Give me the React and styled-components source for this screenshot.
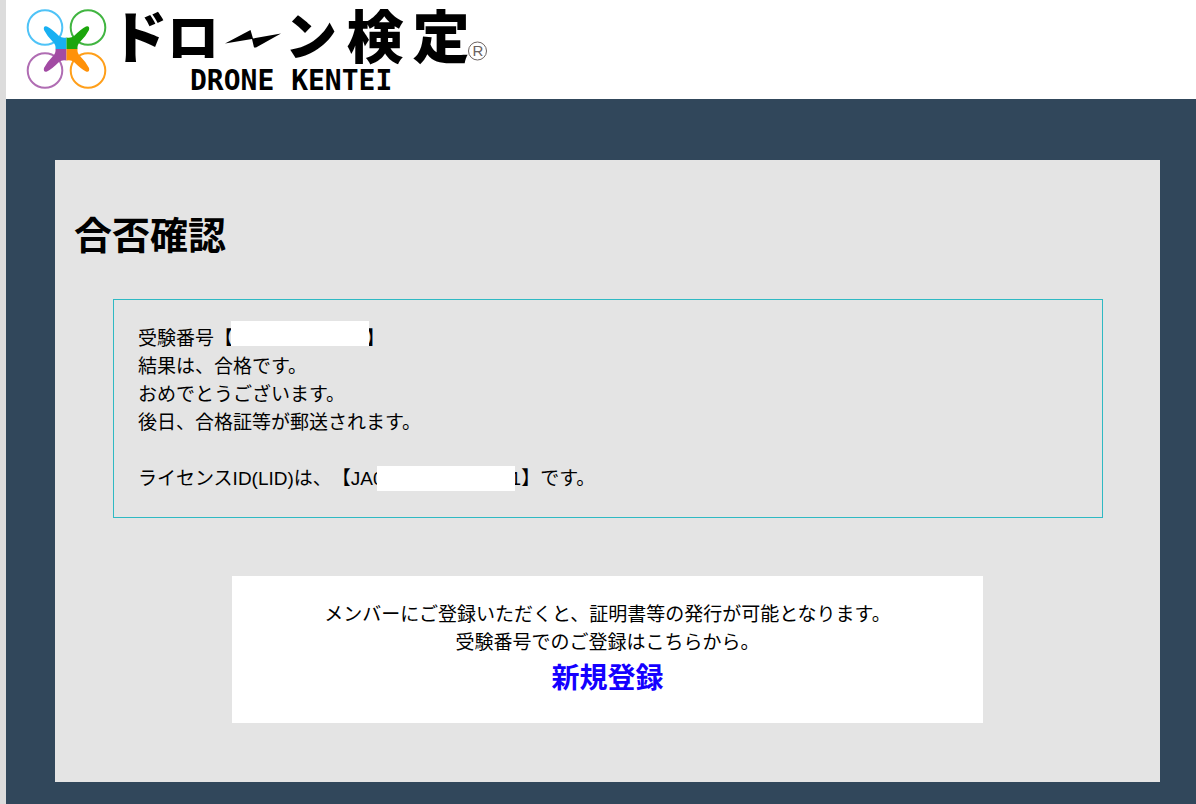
import React from "react";
import styled, { createGlobalStyle } from "styled-components";

const GlobalStyle = createGlobalStyle`
  body {
    margin: 0;
    background: #31475b;
    color: #000;
    font-family: "Liberation Sans", "Noto Sans CJK JP", sans-serif;
    font-size: 19px;
    line-height: 28px;
    text-spacing-trim: space-all;
  }
`;

const Page = styled.div`
  box-sizing: border-box;
  min-height: 100vh;
  border-left: 6px solid #dcdcdc;
  background: #31475b;
`;

const Header = styled.header`
  padding-left: 16px;
  background: #fff;
`;

const LogoArt = styled.svg`
  display: block;
  width: 480px;
  height: 99px;
  overflow: visible;
`;

const LogoKana = styled.text`
  font-family: "Noto Sans CJK JP", sans-serif;
  font-size: ${(p) => (p.$small ? "52px" : "57px")};
  font-weight: 900;
  text-anchor: middle;
`;

const LogoLatin = styled.text`
  font-family: "DejaVu Sans Mono", monospace;
  font-size: 28px;
  font-weight: 700;
`;

const LogoMark = styled.text`
  font-family: "Liberation Sans", sans-serif;
  font-size: 15px;
  fill: #6b6260;
  text-anchor: middle;
`;

const Main = styled.main`
  padding: 61px 36px 22px 49px;
`;

const Panel = styled.section`
  padding: 50px 0 59px;
  background: #e4e4e4;
`;

const Title = styled.h1`
  margin: 0 19px 37px;
  font-size: 38px;
  font-weight: 700;
  line-height: 52px;
`;

const Result = styled.div`
  margin: 0 57px 58px 58px;
  padding: 25px 24px 24px;
  border: 1px solid #2fb9c3;
`;

const Line = styled.p`
  display: flex;
  align-items: flex-start;
  min-height: 28px;
  margin: 0;
`;

const Mask = styled.span`
  flex: none;
  width: 138px;
  height: 25px;
  margin: ${(p) => (p.$inset ? "1px -4px 0 -7px" : "-4px -3px 0 -2px")};
  background: #fff;
  z-index: 1;
`;

const Signup = styled.div`
  box-sizing: border-box;
  width: 68%;
  margin: 0 auto;
  padding: 25px 24px 22px;
  background: #fff;
  text-align: center;
`;

const Note = styled.p`
  margin: 0;
`;

const SignupLink = styled.a`
  display: inline-block;
  color: #1400ff;
  font-size: 28px;
  font-weight: 700;
  line-height: 44px;
  text-decoration: none;
  vertical-align: top;
`;

function Logo() {
  return (
    <LogoArt viewBox="22 0 480 99" role="img" aria-label="ドローン検定 DRONE KENTEI">
      <g fill="none" strokeWidth="2">
        <circle cx="45" cy="27.500" r="17.300" stroke="#4fc3f7" />
        <circle cx="88" cy="27.500" r="17.300" stroke="#41b541" />
        <circle cx="45" cy="70.500" r="17.300" stroke="#b06db3" />
        <circle cx="88" cy="70.500" r="17.300" stroke="#ff9f1a" />
      </g>
      <path d="M66.500 49V37.500Q62 38.500 59 36Q52 29 47 26.500Q43 25.500 44 30Q47 36 53 42Q56 45 55.500 49Z" fill="#18b0f2" />
      <path d="M66.500 49V37.500Q71 38.500 74 36Q81 29 86 26.500Q90 25.500 89 30Q86 36 80 42Q77 45 77.500 49Z" fill="#1ca60c" />
      <path d="M66.500 49V60.500Q62 59.500 59 62Q52 69 47 71.500Q43 72.500 44 68Q47 62 53 56Q56 53 55.500 49Z" fill="#a24ba3" />
      <path d="M66.500 49V60.500Q71 59.500 74 62Q81 69 86 71.500Q90 72.500 89 68Q86 62 80 56Q77 53 77.500 49Z" fill="#ff9108" />
      <LogoKana x="139" y="58">ド</LogoKana>
      <LogoKana $small x="193" y="57">ロ</LogoKana>
      <path d="M225 43.500L250.500 30L253 38.500L281 33.500L256 47.500H254L252 39Z" fill="#000" />
      <LogoKana $small x="311" y="56">ン</LogoKana>
      <LogoKana x="375" y="58">検</LogoKana>
      <LogoKana x="441" y="58">定</LogoKana>
      <LogoLatin x="190" y="90">DRONE KENTEI</LogoLatin>
      <circle cx="477.500" cy="51" r="9" fill="none" stroke="#6b6260" />
      <LogoMark x="478" y="56">R</LogoMark>
    </LogoArt>
  );
}

export default function App() {
  return (
    <>
      <GlobalStyle />
      <Page>
        <Header>
          <Logo />
        </Header>
        <Main>
          <Panel>
            <Title>合否確認</Title>
            <Result>
              <Line>受験番号【<Mask />】</Line>
              <Line>結果は、合格です。</Line>
              <Line>おめでとうございます。</Line>
              <Line>後日、合格証等が郵送されます。</Line>
              <Line />
              <Line>ライセンスID(LID)は、【JA0<Mask $inset />1】です。</Line>
            </Result>
            <Signup>
              <Note>メンバーにご登録いただくと、証明書等の発行が可能となります。</Note>
              <Note>受験番号でのご登録はこちらから。</Note>
              <SignupLink href="#signup">新規登録</SignupLink>
            </Signup>
          </Panel>
        </Main>
      </Page>
    </>
  );
}
